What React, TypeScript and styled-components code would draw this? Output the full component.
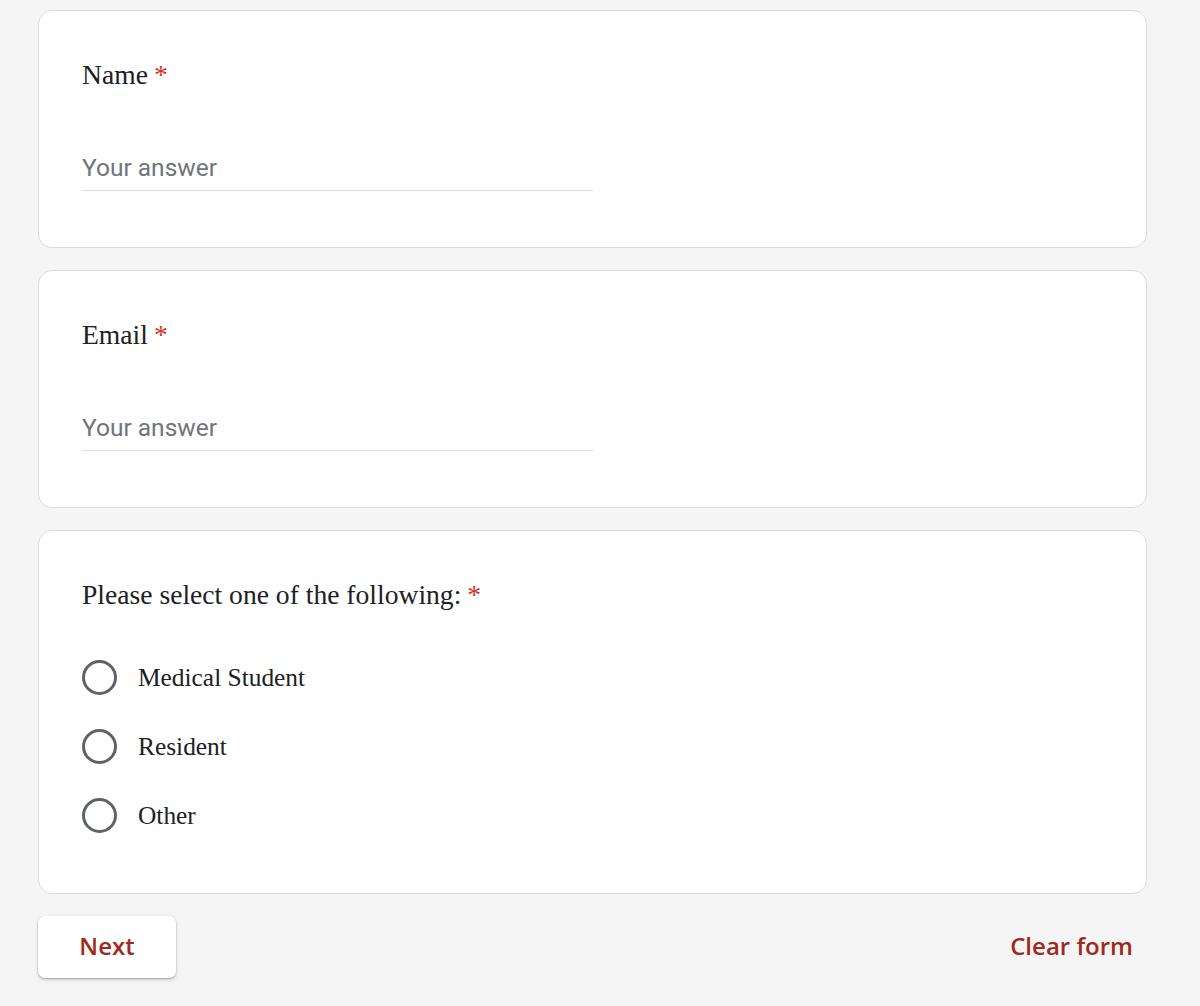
import React from "react";
import styled, { createGlobalStyle } from "styled-components";

const Global = createGlobalStyle`
  html, body { margin: 0; padding: 0; background: #f5f5f5; }
  body { font-family: "Liberation Serif", "Times New Roman", serif; }
`;

const Page = styled.div`
  width: 1109px;
  margin-left: 38px;
  padding-top: 10px;
  display: flex;
  flex-direction: column;
  gap: 22px;
`;

const Card = styled.div<{ $bottom: number }>`
  background: #fff;
  border: 1px solid #dadce0;
  border-radius: 14px;
  padding: 47px 43px ${(p) => p.$bottom}px;
  box-sizing: border-box;
`;

const Label = styled.div`
  font-family: "Liberation Serif", "Times New Roman", serif;
  font-size: 27.6px;
  line-height: 33px;
  color: #202124;
`;

const Star = styled.span`
  color: #d93025;
  margin-left: 6px;
`;

const Input = styled.div`
  margin-top: 62px;
  width: 511px;
  border-bottom: 1.5px solid #dadce0;
  padding-bottom: 7px;
  font-family: Roboto, "Liberation Sans", sans-serif;
  font-size: 24.5px;
  line-height: 30px;
  color: #70757a;
`;

const Options = styled.div`
  margin-top: 49px;
  display: flex;
  flex-direction: column;
  gap: 34px;
`;

const Option = styled.label`
  display: flex;
  align-items: center;
  gap: 21px;
  height: 35px;
  font-family: "Liberation Serif", "Times New Roman", serif;
  font-size: 25.4px;
  color: #202124;
`;

const Radio = styled.span`
  width: 35px;
  height: 35px;
  box-sizing: border-box;
  border: 3px solid #5f6368;
  border-radius: 50%;
  flex: none;
`;

const Footer = styled.div`
  display: flex;
  justify-content: space-between;
  align-items: center;
  margin-bottom: 30px;
`;

const NextButton = styled.button`
  width: 138px;
  height: 62px;
  border: none;
  border-radius: 7px;
  background: #fff;
  box-shadow: 0 1px 2px rgba(60, 64, 67, 0.35), 0 2px 4px rgba(60, 64, 67, 0.15);
  font-family: "Open Sans", Roboto, sans-serif;
  font-weight: 600;
  font-size: 24px;
  color: #a0281c;
  padding: 0 0 3px;
`;

const ClearButton = styled.button`
  border: none;
  background: transparent;
  padding: 0 14px 3px 0;
  font-family: "Open Sans", Roboto, sans-serif;
  font-weight: 600;
  font-size: 24px;
  color: #a0281c;
`;

export default function App() {
  return (
    <>
      <Global />
      <Page>
        <Card $bottom={56}>
          <Label>
            Name<Star>*</Star>
          </Label>
          <Input>Your answer</Input>
        </Card>
        <Card $bottom={56}>
          <Label>
            Email<Star>*</Star>
          </Label>
          <Input>Your answer</Input>
        </Card>
        <Card $bottom={60}>
          <Label>
            Please select one of the following:<Star>*</Star>
          </Label>
          <Options>
            {["Medical Student", "Resident", "Other"].map((o) => (
              <Option key={o}>
                <Radio />
                {o}
              </Option>
            ))}
          </Options>
        </Card>
        <Footer>
          <NextButton>Next</NextButton>
          <ClearButton>Clear form</ClearButton>
        </Footer>
      </Page>
    </>
  );
}
